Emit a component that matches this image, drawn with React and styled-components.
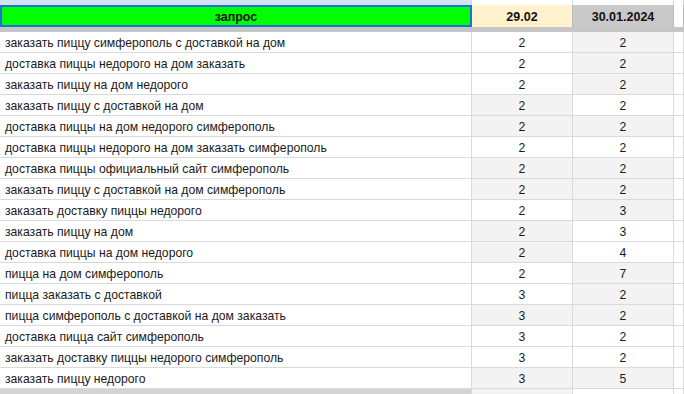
import React from "react";
import styled, { createGlobalStyle } from "styled-components";

const GlobalStyle = createGlobalStyle`
  html, body {
    margin: 0;
    padding: 0;
    background: #ffffff;
  }
  body {
    font-family: "Liberation Sans", Arial, sans-serif;
    color: #1a1a1a;
  }
`;

const Sheet = styled.div`
  width: 684px;
  height: 394px;
  overflow: hidden;
  background: #ffffff;
`;

const Grid = styled.div`
  display: grid;
  grid-template-columns: 472px 101px 101px 1fr;
`;

const Cell = styled.div`
  box-sizing: border-box;
  height: ${(p) => p.$h || 21}px;
  border-right: 1px solid #dadada;
  border-bottom: ${(p) => (p.$noBottom ? "none" : "1px solid #dadada")};
  background: ${(p) => p.$bg || "#ffffff"};
  display: flex;
  align-items: center;
  justify-content: ${(p) => (p.$center ? "center" : "flex-start")};
  padding-left: ${(p) => (p.$center ? 0 : 5)}px;
  padding-top: 1px;
  font-size: 12.2px;
  white-space: nowrap;
  overflow: hidden;
`;

const HeadCell = styled.div`
  box-sizing: border-box;
  height: 22px;
  display: flex;
  align-items: center;
  justify-content: center;
  padding-top: 2px;
  font-size: 12.5px;
  font-weight: bold;
  color: #111111;
  background: ${(p) => p.$bg};
  border: ${(p) => (p.$selected ? "2px solid #1f6fe0" : "none")};
  border-right: ${(p) => (p.$selected ? "2px solid #1f6fe0" : "1px solid #b9b9b9")};
`;

const Divider = styled.div`
  grid-column: 1 / -1;
  height: 5px;
  background: #c6c6c6;
`;

const rows = [
  ["заказать пиццу симферополь с доставкой на дом", 2, 2, "w", "g"],
  ["доставка пиццы недорого на дом заказать", 2, 2, "w", "g"],
  ["заказать пиццу на дом недорого", 2, 2, "w", "g"],
  ["заказать пиццу с доставкой на дом", 2, 2, "g", "w"],
  ["доставка пиццы на дом недорого симферополь", 2, 2, "g", "g"],
  ["доставка пиццы недорого на дом заказать симферополь", 2, 2, "w", "w"],
  ["доставка пиццы официальный сайт симферополь", 2, 2, "g", "g"],
  ["заказать пиццу с доставкой на дом симферополь", 2, 2, "g", "g"],
  ["заказать доставку пиццы недорого", 2, 3, "w", "g"],
  ["заказать пиццу на дом", 2, 3, "g", "w"],
  ["доставка пиццы на дом недорого", 2, 4, "g", "w"],
  ["пицца на дом симферополь", 2, 7, "w", "g"],
  ["пицца заказать с доставкой", 3, 2, "w", "g"],
  ["пицца симферополь с доставкой на дом заказать", 3, 2, "g", "g"],
  ["доставка пицца сайт симферополь", 3, 2, "w", "w"],
  ["заказать доставку пиццы недорого симферополь", 3, 2, "w", "w"],
  ["заказать пиццу недорого", 3, 5, "g", "g"],
];

const shade = (s) => (s === "g" ? "#f3f3f3" : "#ffffff");

export default function App() {
  return (
    <Sheet>
      <GlobalStyle />
      <Grid>
        <Cell $h={5} $bg="#d3e2f5" $noBottom />
        <Cell $h={5} $noBottom />
        <Cell $h={5} $noBottom />
        <Cell $h={5} $noBottom />

        <HeadCell $bg="#00ff00" $selected>запрос</HeadCell>
        <HeadCell $bg="#fff2cc">29.02</HeadCell>
        <HeadCell $bg="#c9c9c9">30.01.2024</HeadCell>
        <HeadCell $bg="#ffffff" />

        <Divider />

        {rows.map(([q, a, b, sa, sb]) => (
          <React.Fragment key={q}>
            <Cell>{q}</Cell>
            <Cell $center $bg={shade(sa)}>{a}</Cell>
            <Cell $center $bg={shade(sb)}>{b}</Cell>
            <Cell />
          </React.Fragment>
        ))}

        <Cell $bg="#d4d4d4" />
        <Cell $bg="#f3f3f3" />
        <Cell />
        <Cell />
      </Grid>
    </Sheet>
  );
}
